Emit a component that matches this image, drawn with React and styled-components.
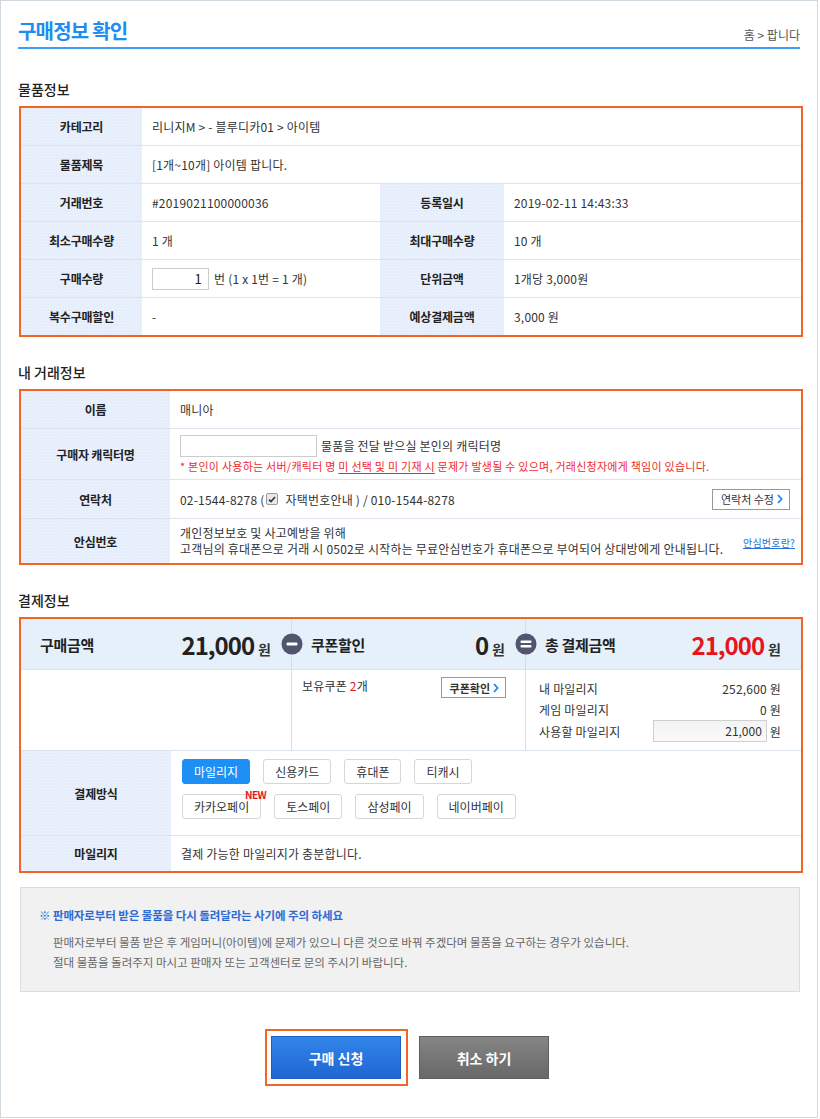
import React from 'react';
import styled, { createGlobalStyle } from 'styled-components';

const GlobalStyle = createGlobalStyle`
    * { box-sizing: border-box; }
    body {
        margin: 0;
        background: #fff;
        font-family: "Noto Sans CJK KR", "Noto Sans", sans-serif;
        color: #333;
    }
`

const Frame = styled.div`
    width: 818px;
    height: 1118px;
    border: 1px solid #cfd7df;
    padding: 0 17px;
`

const Header = styled.div`
    display: flex;
    justify-content: space-between;
    align-items: flex-end;
    margin-top: 17px;
    padding-bottom: 3px;
    border-bottom: 2px solid #3d9df3;
`

const Title = styled.h1`
    margin: 0;
    font-size: 20px;
    line-height: 26px;
    font-weight: 700;
    letter-spacing: -0.8px;
    color: #1d8df0;
`

const Crumb = styled.div`
    font-size: 12px;
    line-height: 18px;
    color: #555;
`

const SectionTitle = styled.h2`
    margin: ${p => p.$top}px 0 7px;
    font-size: 14px;
    line-height: 20px;
    font-weight: 500;
    color: #222;
`

const Box = styled.div`
    margin-left: 1px;
    width: 784px;
    border: 2px solid #f26522;
    background: #fff;
`

const Row = styled.div`
    display: grid;
    grid-template-columns: ${p => p.$cols};
    height: ${p => p.$h}px;
    & + & {
        border-top: 1px ${p => (p.$solid ? 'solid #dbe3ed' : 'dotted #c5d1df')};
    }
`

const Label = styled.div`
    display: flex;
    align-items: center;
    justify-content: center;
    background-color: #e5eefa;
    background-image: radial-gradient(circle, rgba(255, 255, 255, 0.45) 0.6px, transparent 0.9px);
    background-size: 3px 3px;
    font-size: 12px;
    font-weight: 700;
    letter-spacing: -0.2px;
    color: #222;
`

const Value = styled.div`
    grid-column: span ${p => p.$span || 1};
    display: flex;
    align-items: center;
    padding: 0 ${p => p.$right || 10}px 0 10px;
    font-size: 12px;
    letter-spacing: 0.2px;
    color: #333;
`

const QtyInput = styled.div`
    width: 57px;
    height: 22px;
    border: 1px solid #ccc;
    margin-right: 5px;
    padding-right: 6px;
    text-align: right;
    font-size: 13px;
    line-height: 20px;
    color: #222;
`

const NameInput = styled.div`
    width: 137px;
    height: 22px;
    border: 1px solid #ccc;
    margin-right: 4px;
`

const Stack = styled.div`
    display: flex;
    flex-direction: column;
    gap: 1px;
`

const Line = styled.div`
    display: flex;
    align-items: center;
`

const Warn = styled.div`
    font-size: 11px;
    letter-spacing: 0.25px;
    color: #f3282c;
    u { text-underline-offset: 2px; }
`

const Check = styled.span`
    display: inline-flex;
    align-items: center;
    justify-content: center;
    width: 12px;
    height: 12px;
    margin: 0 7px 0 2px;
    border: 1px solid #9c9c9c;
    border-radius: 2px;
    background: #e9e9e9;
`

const SmallBtn = styled.button`
    display: inline-flex;
    align-items: center;
    gap: 3px;
    height: 21px;
    padding: 0 6px 0 8px;
    border: 1px solid #9a9a9a;
    background: #fff;
    font-family: inherit;
    font-size: 11px;
    font-weight: ${p => p.$bold ? 700 : 400};
    letter-spacing: 0;
    color: #333;
`

const Notes = styled.div`
    line-height: 16px;
`

const HelpLink = styled.a`
    flex-shrink: 0;
    align-self: flex-start;
    margin-top: 10px;
    font-size: 10px;
    color: #2a6fd6;
    text-decoration: underline;
`

const SpreadRow = styled.div`
    display: flex;
    align-items: center;
    justify-content: space-between;
    width: 100%;
`

/* 결제정보 */
const SumCell = styled.div`
    position: relative;
    display: flex;
    align-items: center;
    padding: 0 20px 0 19px;
    background: #e6f0fb;
    border-left: ${p => p.$first ? 'none' : '1px solid #d3deea'};
`

const SumLabel = styled.div`
    font-size: 15px;
    font-weight: 700;
    letter-spacing: -0.3px;
    color: #222;
`

const Amount = styled.div`
    margin-left: auto;
    display: flex;
    align-items: baseline;
    font-size: 24px;
    font-weight: 700;
    letter-spacing: -1px;
    color: ${p => p.$red ? '#e8141c' : '#222'};
    span {
        margin-left: 4px;
        font-size: 14px;
        letter-spacing: 0;
        color: #333;
    }
`

const OpIcon = styled.svg`
    position: absolute;
    left: -11px;
    top: 50%;
    transform: translateY(-50%);
`

const DetailCell = styled.div`
    border-left: ${p => p.$first ? 'none' : '1px solid #d3deea'};
    padding: ${p => p.$pad};
    font-size: 12px;
    letter-spacing: 0.2px;
`

const CouponLine = styled.div`
    display: flex;
    justify-content: space-between;
    align-items: flex-start;
    line-height: 17px;
    em { font-style: normal; color: #e8141c; }
`

const MileRow = styled.div`
    display: flex;
    align-items: center;
    justify-content: space-between;
    height: ${p => p.$h || 21}px;
    color: #333;
`

const MileInput = styled.div`
    width: 114px;
    height: 22px;
    border: 1px solid #d0d0d0;
    background: linear-gradient(#f3f3f3, #fafafa);
    padding-right: 4px;
    text-align: right;
    line-height: 20px;
    letter-spacing: 0;
`

const Methods = styled.div`
    display: flex;
    flex-direction: column;
    gap: 10px;
    padding: 8px 10px 0 11px;
`

const MethodLine = styled.div`
    display: flex;
    gap: 13px;
`

const Method = styled.button`
    position: relative;
    height: 25px;
    padding: 0 11px;
    border: 1px solid ${p => p.$active ? '#1e90f5' : '#d6d6d6'};
    border-radius: 3px;
    background: ${p => p.$active ? '#1e90f5' : '#fff'};
    color: ${p => p.$active ? '#fff' : '#333'};
    font-family: inherit;
    font-size: 12px;
    letter-spacing: 0;
`

const NewBadge = styled.span`
    position: absolute;
    top: -5px;
    right: -6px;
    font-size: 10px;
    line-height: 10px;
    font-weight: 700;
    letter-spacing: -0.5px;
    color: #e8141c;
`

/* 안내 */
const Notice = styled.div`
    margin: 14px 0 0 2px;
    width: 780px;
    height: 105px;
    padding: 19px 18px 0;
    background: #f1f1f1;
    border: 1px solid #dcdcdc;
`

const NoticeTitle = styled.div`
    font-size: 11.5px;
    line-height: 16px;
    font-weight: 700;
    letter-spacing: -0.1px;
    color: #2f6bd1;
`

const NoticeText = styled.div`
    margin-top: 9px;
    padding-left: 14px;
    font-size: 11.5px;
    line-height: 20px;
    color: #666;
`

const ButtonBar = styled.div`
    display: flex;
    justify-content: center;
    align-items: center;
    gap: 11px;
    margin: 37px 4px 0 0;
`

const Focus = styled.div`
    border: 2px solid #f26522;
    padding: 5px 5px 5px 4px;
`

const BigBtn = styled.button`
    width: 130px;
    height: 43px;
    border: 1px solid ${p => p.$gray ? '#5e5e5e' : '#1d5fc0'};
    background: ${p => p.$gray ? 'linear-gradient(#858585, #686868)' : 'linear-gradient(#3285ea, #1f66d2)'};
    color: #fff;
    font-family: inherit;
    font-size: 14px;
    font-weight: 700;
`

const Chevron = () => (
    <svg width="6" height="10" viewBox="0 0 6 10">
        <path d="M1 1l3.6 4L1 9" fill="none" stroke="#1e88f0" strokeWidth="1.8" />
    </svg>
)

const Operator = ({ type }) => (
    <OpIcon width="22" height="22" viewBox="0 0 22 22">
        <circle cx="11" cy="11" r="10.5" fill="#51566f" />
        {type === 'minus' ? (
            <rect x="5.5" y="9.5" width="11" height="3" rx="1.2" fill="#fff" />
        ) : (
            <>
                <rect x="5.5" y="7.5" width="11" height="2.6" rx="1" fill="#fff" />
                <rect x="5.5" y="12" width="11" height="2.6" rx="1" fill="#fff" />
            </>
        )}
    </OpIcon>
)

const itemCols = '121px 238px 124px 1fr'
const myCols = '149px 1fr'
const payCols = '270px 234px 1fr'
const fieldCols = '150px 1fr'

const App = () => {
    return (
        <>
            <GlobalStyle />
            <Frame>
                <Header>
                    <Title>구매정보 확인</Title>
                    <Crumb>홈 &gt; 팝니다</Crumb>
                </Header>

                <SectionTitle $top={30}>물품정보</SectionTitle>
                <Box>
                    <Row $cols={itemCols} $h={37}>
                        <Label>카테고리</Label>
                        <Value $span={3}>리니지M &gt; - 블루디카01 &gt; 아이템</Value>
                    </Row>
                    <Row $cols={itemCols} $h={38}>
                        <Label>물품제목</Label>
                        <Value $span={3}>[1개~10개] 아이템 팝니다.</Value>
                    </Row>
                    <Row $cols={itemCols} $h={38}>
                        <Label>거래번호</Label>
                        <Value>#2019021100000036</Value>
                        <Label>등록일시</Label>
                        <Value>2019-02-11 14:43:33</Value>
                    </Row>
                    <Row $cols={itemCols} $h={38}>
                        <Label>최소구매수량</Label>
                        <Value>1 개</Value>
                        <Label>최대구매수량</Label>
                        <Value>10 개</Value>
                    </Row>
                    <Row $cols={itemCols} $h={38}>
                        <Label>구매수량</Label>
                        <Value>
                            <QtyInput>1</QtyInput>번 (1 x 1번 = 1 개)
                        </Value>
                        <Label>단위금액</Label>
                        <Value>1개당 3,000원</Value>
                    </Row>
                    <Row $cols={itemCols} $h={38}>
                        <Label>복수구매할인</Label>
                        <Value>-</Value>
                        <Label>예상결제금액</Label>
                        <Value>3,000 원</Value>
                    </Row>
                </Box>

                <SectionTitle $top={25}>내 거래정보</SectionTitle>
                <Box>
                    <Row $cols={myCols} $h={37}>
                        <Label>이름</Label>
                        <Value>매니아</Value>
                    </Row>
                    <Row $cols={myCols} $h={51}>
                        <Label>구매자 캐릭터명</Label>
                        <Value>
                            <Stack>
                                <Line>
                                    <NameInput />물품을 전달 받으실 본인의 캐릭터명
                                </Line>
                                <Warn>
                                    * 본인이 사용하는 서버/캐릭터 명 <u>미 선택 및 미 기재 시</u> 문제가 발생될 수 있으며, 거래신청자에게 책임이 있습니다.
                                </Warn>
                            </Stack>
                        </Value>
                    </Row>
                    <Row $cols={myCols} $h={39}>
                        <Label>연락처</Label>
                        <Value $right={11}>
                            <SpreadRow>
                                <Line>
                                    02-1544-8278 (
                                    <Check>
                                        <svg width="8" height="7" viewBox="0 0 8 7">
                                            <path d="M1 3.6l2 2L7 1" fill="none" stroke="#333" strokeWidth="1.6" />
                                        </svg>
                                    </Check>
                                    자택번호안내 ) / 010-1544-8278
                                </Line>
                                <SmallBtn>연락처 수정<Chevron /></SmallBtn>
                            </SpreadRow>
                        </Value>
                    </Row>
                    <Row $cols={myCols} $h={45}>
                        <Label>안심번호</Label>
                        <Value $right={6}>
                            <SpreadRow>
                                <Notes>
                                    개인정보보호 및 사고예방을 위해<br />
                                    고객님의 휴대폰으로 거래 시 0502로 시작하는 무료안심번호가 휴대폰으로 부여되어 상대방에게 안내됩니다.
                                </Notes>
                                <HelpLink>안심번호란?</HelpLink>
                            </SpreadRow>
                        </Value>
                    </Row>
                </Box>

                <SectionTitle $top={25}>결제정보</SectionTitle>
                <Box>
                    <Row $cols={payCols} $h={50} $solid>
                        <SumCell $first>
                            <SumLabel>구매금액</SumLabel>
                            <Amount>21,000<span>원</span></Amount>
                        </SumCell>
                        <SumCell>
                            <Operator type="minus" />
                            <SumLabel>쿠폰할인</SumLabel>
                            <Amount>0<span>원</span></Amount>
                        </SumCell>
                        <SumCell>
                            <Operator type="equal" />
                            <SumLabel>총 결제금액</SumLabel>
                            <Amount $red>21,000<span>원</span></Amount>
                        </SumCell>
                    </Row>
                    <Row $cols={payCols} $h={81} $solid>
                        <DetailCell $first />
                        <DetailCell $pad="7px 19px 0 10px">
                            <CouponLine>
                                <div>보유쿠폰 <em>2</em>개</div>
                                <SmallBtn $bold>쿠폰확인<Chevron /></SmallBtn>
                            </CouponLine>
                        </DetailCell>
                        <DetailCell $pad="8px 20px 0 13px">
                            <MileRow>
                                <span>내 마일리지</span>
                                <span>252,600 원</span>
                            </MileRow>
                            <MileRow>
                                <span>게임 마일리지</span>
                                <span>0 원</span>
                            </MileRow>
                            <MileRow $h={22}>
                                <span>사용할 마일리지</span>
                                <Line>
                                    <MileInput>21,000</MileInput>&nbsp;원
                                </Line>
                            </MileRow>
                        </DetailCell>
                    </Row>
                    <Row $cols={fieldCols} $h={85} $solid>
                        <Label>결제방식</Label>
                        <Methods>
                            <MethodLine>
                                <Method $active>마일리지</Method>
                                <Method>신용카드</Method>
                                <Method>휴대폰</Method>
                                <Method>티캐시</Method>
                            </MethodLine>
                            <MethodLine>
                                <Method>카카오페이<NewBadge>NEW</NewBadge></Method>
                                <Method>토스페이</Method>
                                <Method>삼성페이</Method>
                                <Method>네이버페이</Method>
                            </MethodLine>
                        </Methods>
                    </Row>
                    <Row $cols={fieldCols} $h={36} $solid>
                        <Label>마일리지</Label>
                        <Value>결제 가능한 마일리지가 충분합니다.</Value>
                    </Row>
                </Box>

                <Notice>
                    <NoticeTitle>※ 판매자로부터 받은 물품을 다시 돌려달라는 사기에 주의 하세요</NoticeTitle>
                    <NoticeText>
                        판매자로부터 물품 받은 후 게임머니(아이템)에 문제가 있으니 다른 것으로 바꿔 주겠다며 물품을 요구하는 경우가 있습니다.<br />
                        절대 물품을 돌려주지 마시고 판매자 또는 고객센터로 문의 주시기 바랍니다.
                    </NoticeText>
                </Notice>

                <ButtonBar>
                    <Focus>
                        <BigBtn>구매 신청</BigBtn>
                    </Focus>
                    <BigBtn $gray>취소 하기</BigBtn>
                </ButtonBar>
            </Frame>
        </>
    );
}

export default App;
